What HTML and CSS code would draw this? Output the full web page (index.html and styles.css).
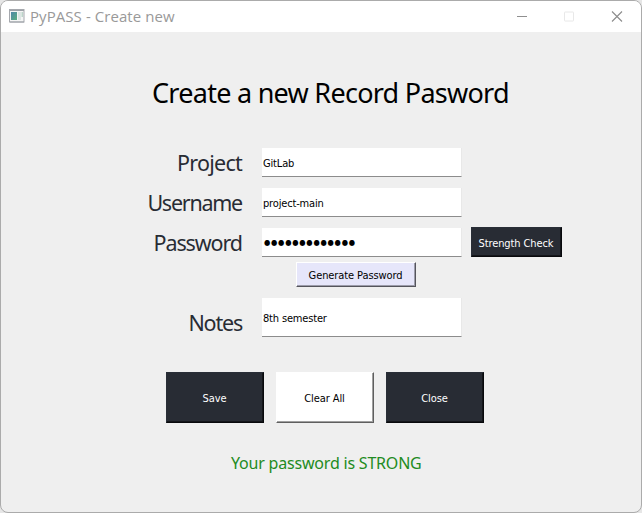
FILE: index.html
```html
<!DOCTYPE html>
<html lang="en">
<head>
<meta charset="utf-8">
<title>PyPASS - Create new</title>
<link rel="stylesheet" href="styles.css">
</head>
<body>
<div class="window">
  <header class="titlebar">
    <svg class="app-icon" width="16" height="14" viewBox="0 0 16 14">
      <defs><linearGradient id="pane" x2="1" y2="1"><stop offset="0" stop-color="#4f87a8"/><stop offset="1" stop-color="#5cae80"/></linearGradient></defs>
      <rect x=".5" y=".5" width="14.500" height="12.500" fill="#f5f5f5" stroke="#a5a8ad"/>
      <path d="M1 1.500h14M1 13h14" stroke="#9da2a8"/>
      <rect x="2" y="3" width="6" height="8" fill="url(#pane)"/>
      <rect x="9" y="3" width="3" height="8" fill="#dce6e3"/>
      <rect x="12.500" y="3" width="1.500" height="5" fill="#bcd5ca"/>
    </svg>
    <span class="caption">PyPASS - Create new</span>
    <svg class="controls" width="108" height="12" viewBox="0 0 108 12" fill="none">
      <path d="M0 5.500h10" stroke="#8f8f8f"/>
      <rect x="47.500" y="1" width="9" height="9" rx=".5" stroke="#e8e8e8"/>
      <path d="M95 .5l10 10M105 .5l-10 10" stroke="#8c8c8c" stroke-width="1.100"/>
    </svg>
  </header>
  <main class="content">
    <h1 class="heading">Create a new Record Pasword</h1>
    <form class="form">
      <label class="label project">Project</label>
      <div class="field">GitLab</div>
      <span></span>
      <label class="label username">Username</label>
      <div class="field">project-main</div>
      <span></span>
      <label class="label password">Password</label>
      <div class="field"><span class="dots">●●●●●●●●●●●●●</span></div>
      <div class="button dark strength">Strength Check</div>
      <div class="button generate">Generate Password</div>
      <label class="label notes">Notes</label>
      <div class="field">8th semester</div>
    </form>
    <div class="actions">
      <div class="button dark">Save</div>
      <div class="button light">Clear All</div>
      <div class="button dark">Close</div>
    </div>
    <p class="status">Your password is STRONG</p>
  </main>
</div>
</body>
</html>
```
FILE: styles.css
```css
* { box-sizing: border-box; }
body { margin: 0; background: #e6e6e6; font: 11px/14px "DejaVu Sans Condensed", "Noto Sans", sans-serif; color: #000; }
.window { width: 642px; height: 513px; border: 1px solid #ababab; border-radius: 8px; background: #efefef; overflow: hidden; }
.titlebar { height: 31px; background: #fff; display: flex; align-items: center; padding: 0 16px 0 8px; }
.app-icon { flex: none; margin-top: -2px; }
.caption { margin-left: 5px; margin-top: -1px; font: 15px/20px "Open Sans", sans-serif; color: #999; letter-spacing: 0.07px; white-space: nowrap; }
.controls { margin-left: auto; }
.content { display: flex; flex-direction: column; }
.heading { margin: 42px 0 0 151px; font: 400 27px/38px "Noto Sans", sans-serif; letter-spacing: -0.73px; white-space: nowrap; }
.form { display: grid; grid-template-columns: 241px 200px 92px; grid-template-rows: 29px 29px 29px 19px 39px; row-gap: 11px; margin-top: 36px; }
.label { justify-self: end; align-self: center; padding-top: 1px; font: 21.5px/30px "Noto Sans", sans-serif; color: #282c34; letter-spacing: -0.75px; white-space: nowrap; }
.username { letter-spacing: -1.25px; }
.password { letter-spacing: -1.1px; }
.notes { align-self: end; margin-bottom: -1px; padding-top: 0; letter-spacing: -1.2px; }
.field { margin-left: 20px; width: 200px; background: #fff; border-bottom: 1px solid #8c8c8c; border-right: 1px solid #e8e8e8; display: flex; align-items: center; padding: 3px 0 0 1px; letter-spacing: -0.17px; white-space: nowrap; }
.dots { font-size: 8px; letter-spacing: 0.78px; padding-left: 1px; margin-top: -1px; }
.button { display: flex; align-items: center; justify-content: center; border: 1px solid; padding: 3px 2px 1px 1px; letter-spacing: -0.1px; white-space: nowrap; }
.dark { background: #282c34; color: #fff; border-color: #292e37 #08090c #08090c #292e37; box-shadow: inset -1px -1px #14161a; }
.strength { margin: -1px 0 0 29px; width: 91px; height: 30px; padding-top: 4px; }
.generate { grid-column: 1 / -1; margin: -6px 0 0 295px; width: 120px; height: 25px; background: #e6e6fa; border-color: #fff #55555c #55555c #fff; box-shadow: inset -1px -1px #9c9caa; }
.light { background: #fff; border-color: #fff #5f5f5f #5f5f5f #fff; box-shadow: inset -1px -1px #a0a0a0; }
.actions { display: flex; gap: 12px; margin: 35px 0 0 165px; }
.actions .button { width: 98px; height: 51px; }
.status { margin: 29px 0 0 230px; font: 16px/22px "Noto Sans", sans-serif; color: #228b22; letter-spacing: -0.2px; white-space: nowrap; }
```
